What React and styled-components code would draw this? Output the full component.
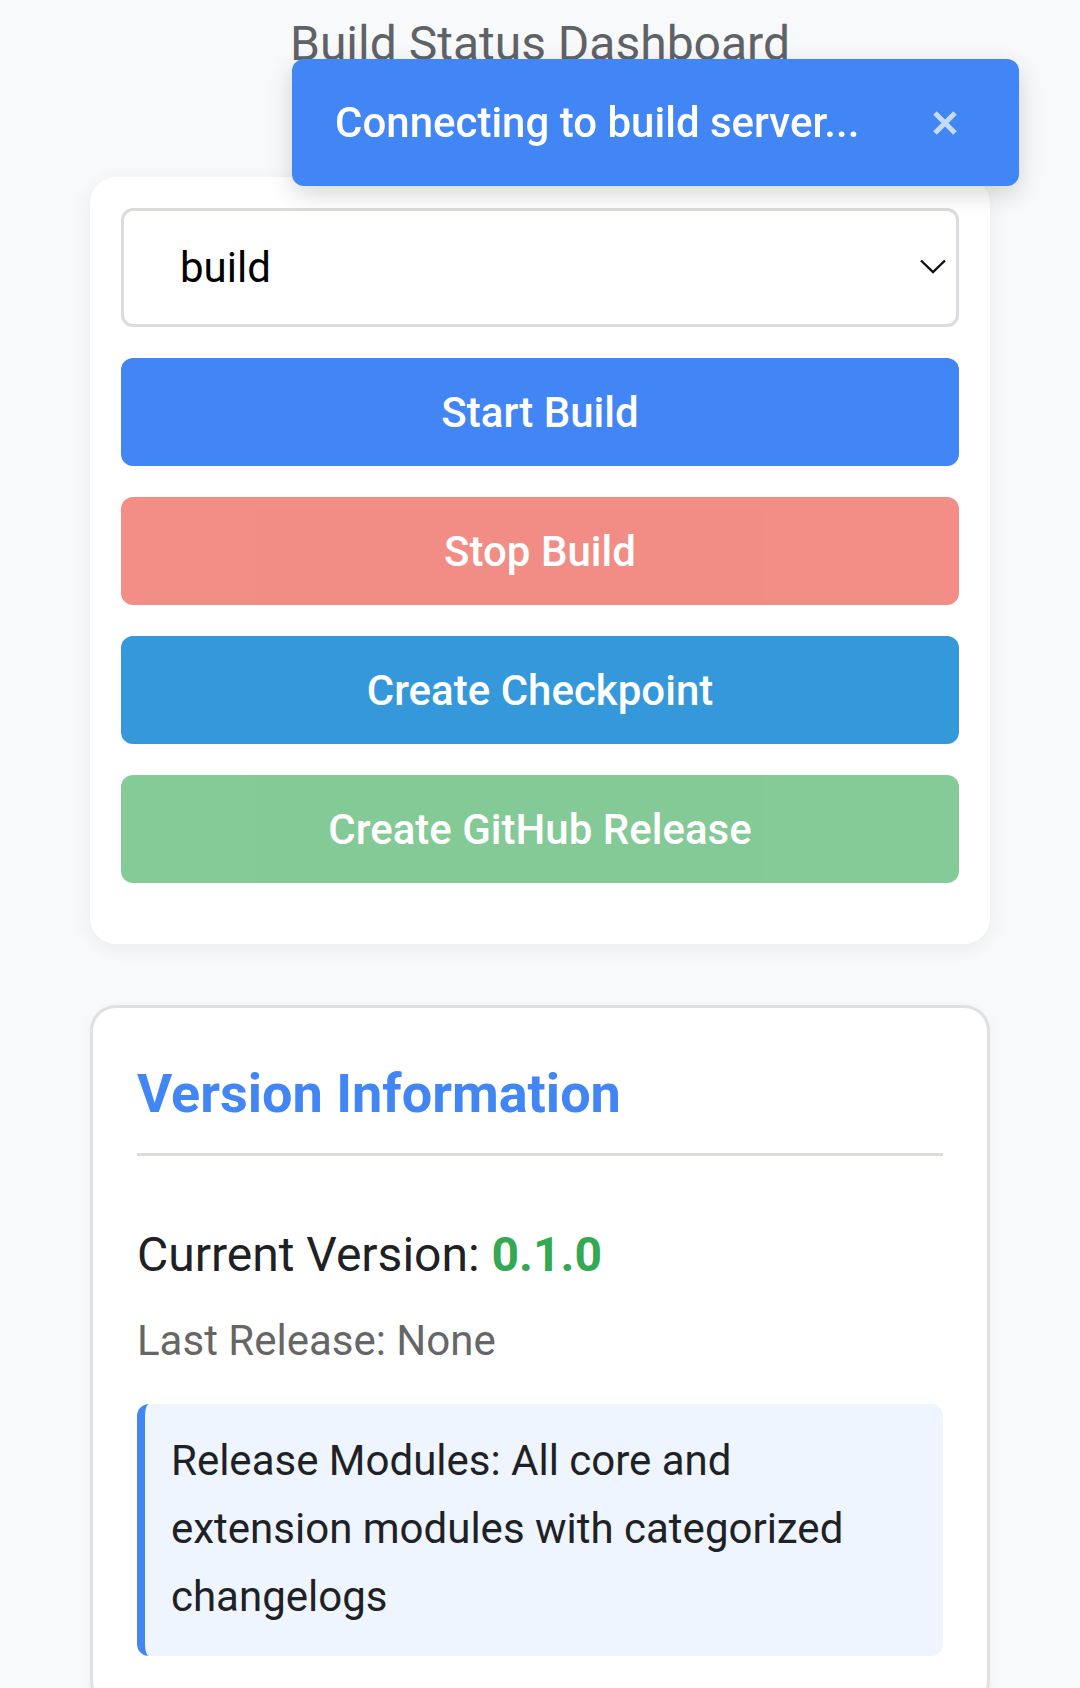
import React, { useState } from "react";
import styled, { createGlobalStyle } from "styled-components";

const GlobalStyle = createGlobalStyle`
  * {
    box-sizing: border-box;
  }
  body {
    margin: 0;
    background: #f8f9fa;
    font-family: Roboto, "Noto Sans", "Liberation Sans", sans-serif;
  }
`;

const actions = [
  { label: "Start Build", color: "#4285f4" },
  { label: "Stop Build", color: "#ea4335", disabled: true },
  { label: "Create Checkpoint", color: "#3498db" },
  { label: "Create GitHub Release", color: "#34a853", disabled: true },
];

const App = () => {
  const [target, setTarget] = useState("build");
  const [toastOn, setToastOn] = useState(true);

  return (
    <>
      <GlobalStyle />
      <Page>
        <Title>Build Status Dashboard</Title>

        <Panel>
          <SelectWrap>
            <Select value={target} onChange={(e) => setTarget(e.target.value)}>
              <option value="build">build</option>
              <option value="test">test</option>
              <option value="release">release</option>
            </Select>
            <Chevron width="26" height="15" viewBox="0 0 26 15">
              <polyline points="1,1.5 13,13 25,1.5" fill="none" stroke="#111" strokeWidth="2.4" />
            </Chevron>
          </SelectWrap>

          {actions.map((a) => (
            <ActionButton key={a.label} type="button" $color={a.color} disabled={a.disabled}>
              {a.label}
            </ActionButton>
          ))}
        </Panel>

        <InfoCard>
          <SectionTitle>Version Information</SectionTitle>
          <VersionLine>
            Current Version: <VersionNumber>0.1.0</VersionNumber>
          </VersionLine>
          <LastRelease>Last Release: None</LastRelease>
          <Notice>
            Release Modules: All core and extension modules with categorized changelogs
          </Notice>
        </InfoCard>
      </Page>

      {toastOn && (
        <Toast>
          <span>Connecting to build server...</span>
          <CloseButton type="button" onClick={() => setToastOn(false)} aria-label="Close">
            <svg width="24" height="24" viewBox="0 0 24 24">
              <path d="M2 2 L22 22 M22 2 L2 22" stroke="currentColor" strokeWidth="5" />
            </svg>
          </CloseButton>
        </Toast>
      )}
    </>
  );
};

export default App;

const Page = styled.div`
  padding: 16px 90px 0;
`;

const Title = styled.h1`
  margin: 0 0 106px;
  font-size: 48px;
  font-weight: 400;
  line-height: 55px;
  text-align: center;
  color: #5f6368;
`;

const Panel = styled.section`
  background: #fff;
  border-radius: 26px;
  padding: 31px 31px 61px;
  display: flex;
  flex-direction: column;
  gap: 31px;
  box-shadow: 0 4px 18px rgba(60, 64, 67, 0.08);
`;

const SelectWrap = styled.div`
  position: relative;
`;

const Select = styled.select`
  appearance: none;
  -webkit-appearance: none;
  width: 100%;
  height: 119px;
  border: 3px solid #dadce0;
  border-radius: 12px;
  background: #fff;
  padding: 0 70px 0 56px;
  font-family: Roboto, sans-serif;
  font-size: 42px;
  color: #000;
  outline: none;
`;

const Chevron = styled.svg`
  position: absolute;
  right: 13px;
  top: 51px;
  pointer-events: none;
`;

const ActionButton = styled.button`
  height: 108px;
  border: none;
  border-radius: 12px;
  background: ${(p) => p.$color};
  opacity: ${(p) => (p.disabled ? 0.6 : 1)};
  color: #fff;
  font-family: Roboto, sans-serif;
  font-size: 42px;
  font-weight: 500;
  cursor: ${(p) => (p.disabled ? "not-allowed" : "pointer")};
`;

const InfoCard = styled.section`
  margin-top: 61px;
  background: #fff;
  border: 3px solid #e0e0e0;
  border-radius: 26px;
  padding: 53px 44px 48px;
  box-shadow: 0 2px 8px rgba(60, 64, 67, 0.06);
`;

const SectionTitle = styled.h2`
  margin: 0;
  padding-bottom: 27px;
  border-bottom: 3px solid #dadce0;
  font-size: 54px;
  font-weight: 700;
  line-height: 65px;
  color: #4285f4;
`;

const VersionLine = styled.p`
  margin: 64px 0 0;
  font-size: 48px;
  line-height: 69px;
  color: #202124;
`;

const VersionNumber = styled.span`
  font-weight: 700;
  color: #34a853;
`;

const LastRelease = styled.p`
  margin: 20px 0 0;
  font-size: 42px;
  line-height: 63px;
  color: #666;
`;

const Notice = styled.div`
  margin-top: 32px;
  background: #eef5fe;
  border-left: 8px solid #4285f4;
  border-radius: 12px;
  padding: 23px 42px 25px 26px;
  font-size: 42px;
  line-height: 68px;
  color: #202124;
`;

const Toast = styled.div`
  position: fixed;
  top: 59px;
  left: 292px;
  width: 727px;
  height: 127px;
  padding: 0 62px 0 43px;
  display: flex;
  align-items: center;
  justify-content: space-between;
  background: #4285f4;
  border-radius: 12px;
  color: #fff;
  font-size: 42px;
  font-weight: 500;
  box-shadow: 0 8px 24px rgba(0, 0, 0, 0.16);
`;

const CloseButton = styled.button`
  display: flex;
  padding: 0;
  border: none;
  background: none;
  color: rgba(255, 255, 255, 0.7);
  cursor: pointer;
`;
